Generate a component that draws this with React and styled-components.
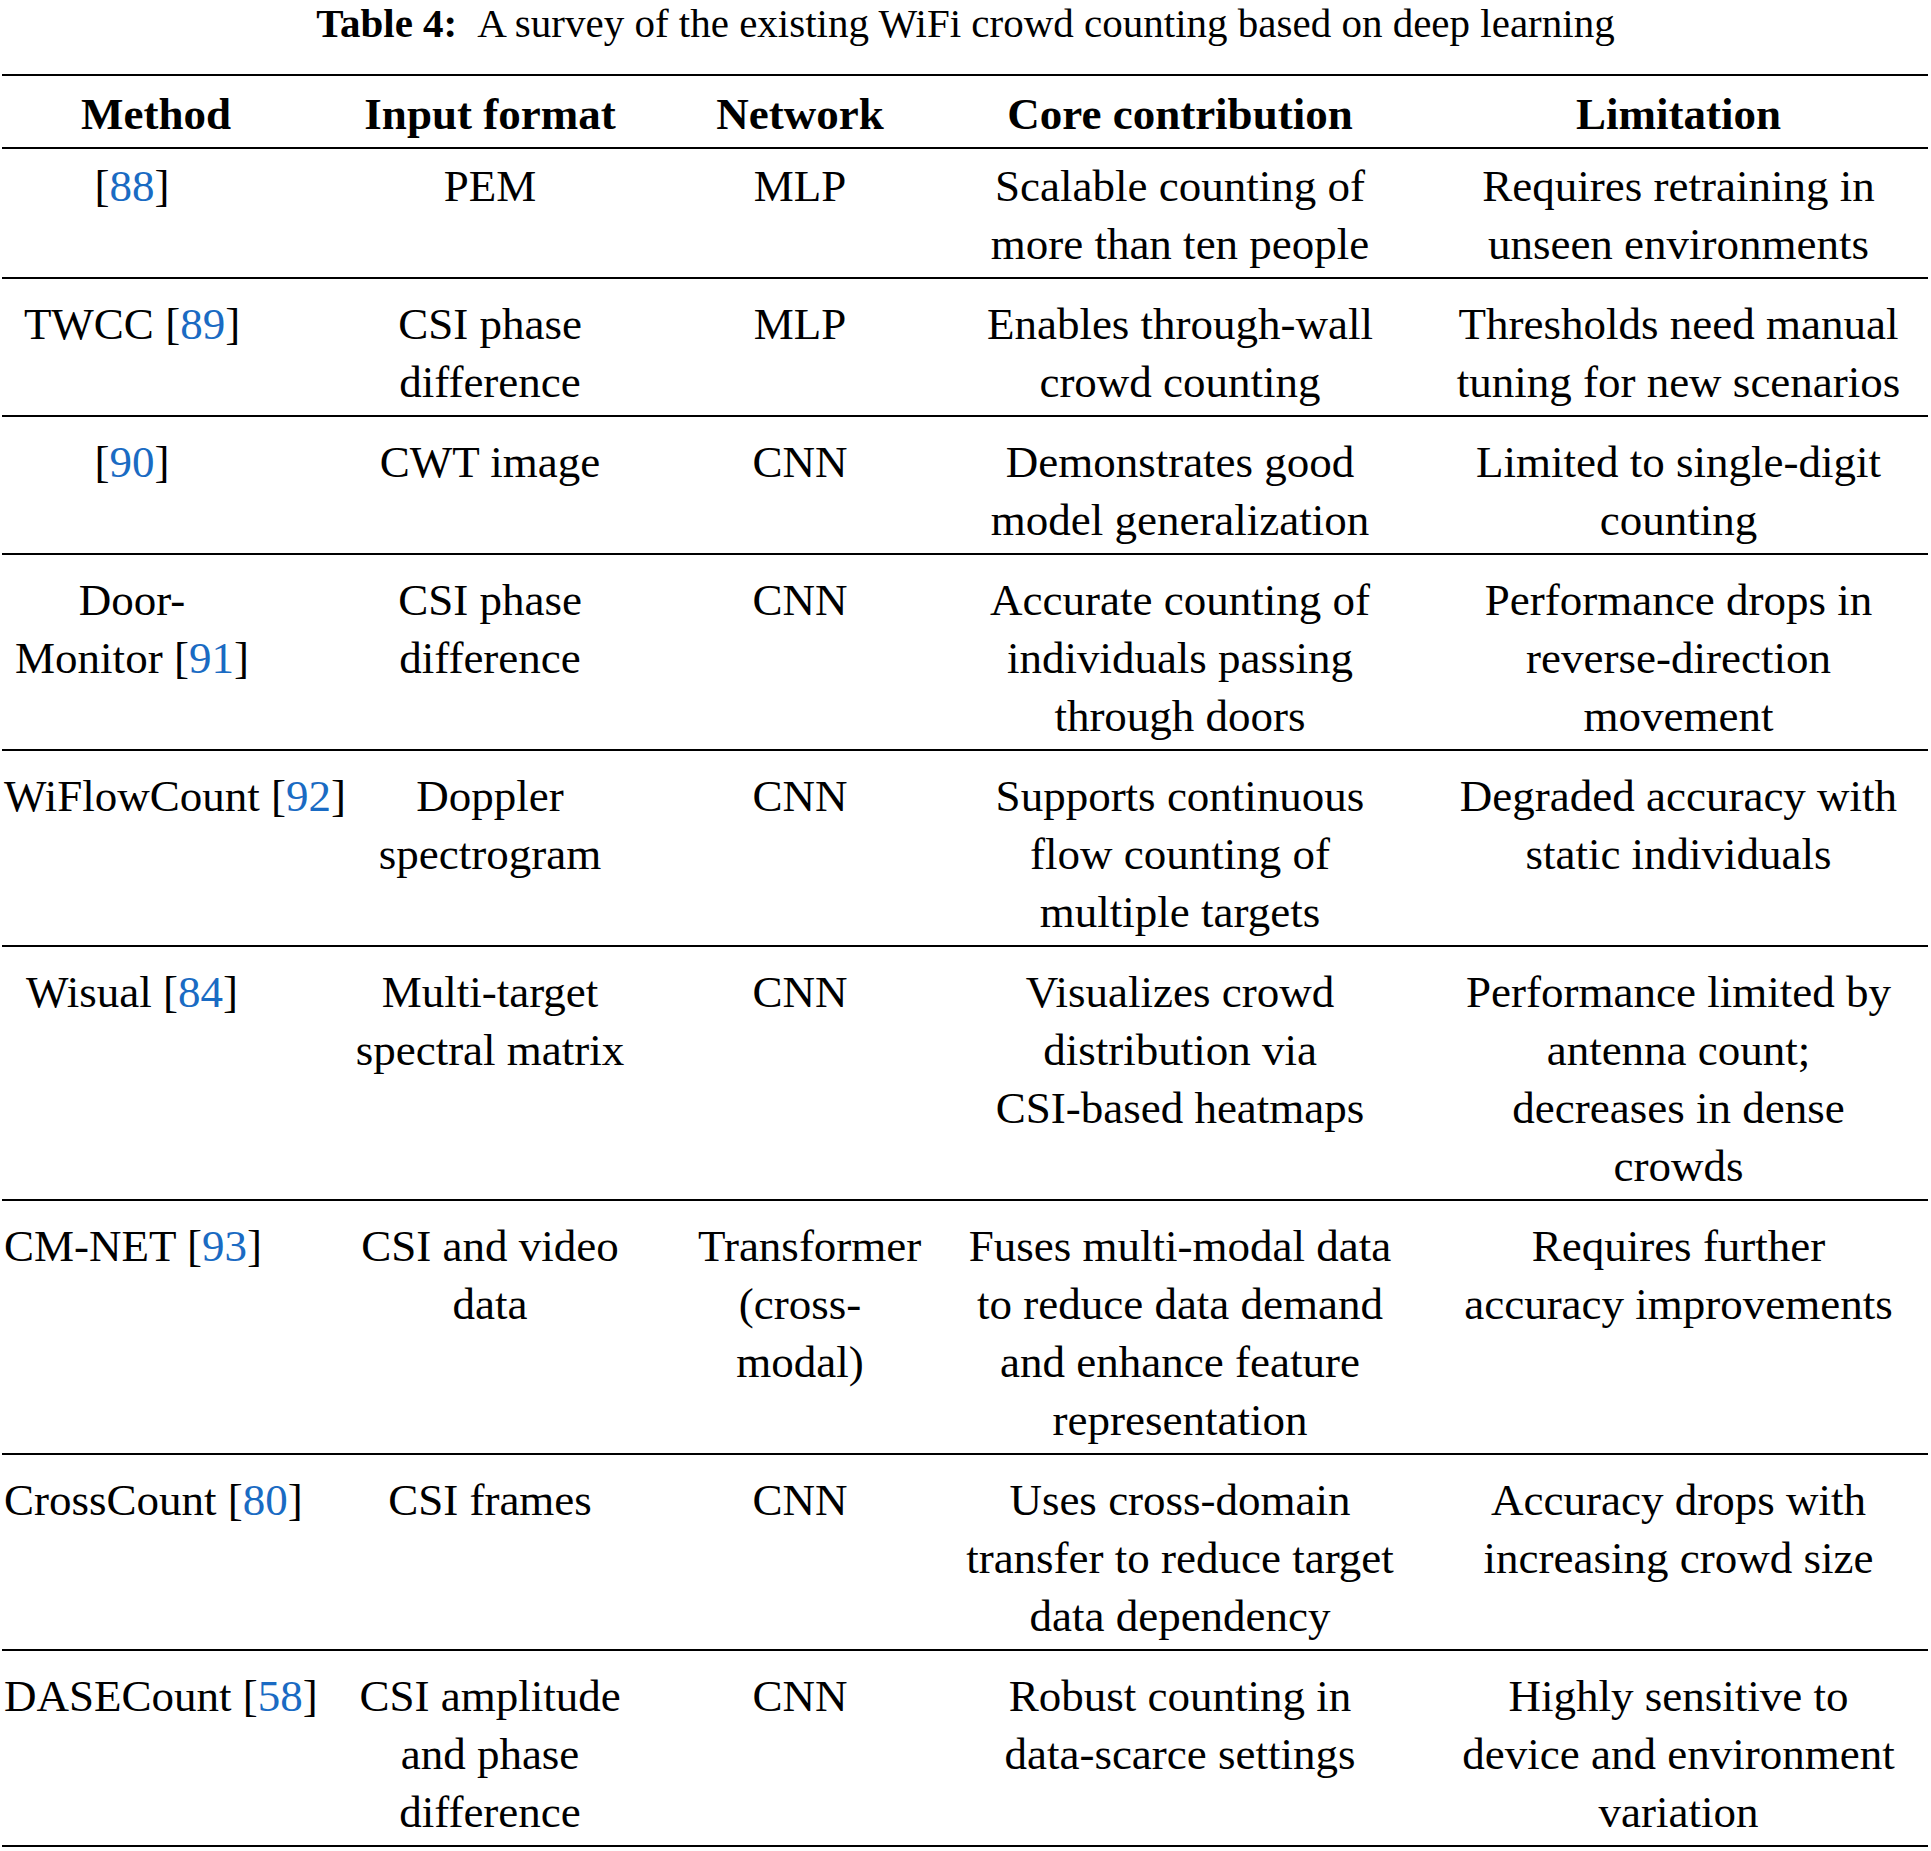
import React from 'react'
import styled, { createGlobalStyle } from 'styled-components'

const GlobalStyle = createGlobalStyle`
  body {
    margin: 0;
    background: #fff;
    color: #000;
    font-family: "Liberation Serif", "Times New Roman", serif;
  }
`

const Page = styled.div`
  width: 1931px;
`

const Caption = styled.div`
  font-size: 41px;
  line-height: 46px;
  text-align: center;
  white-space: nowrap;
  margin-bottom: 28px;
`

const CaptionLabel = styled.b`
  font-weight: 700;
  margin-right: 20px;
`

const Table = styled.div`
  margin-left: 2px;
  width: 1926px;
  border-top: 2px solid #000;
  font-size: 45px;
  line-height: 58px;
`

const Row = styled.div`
  display: flex;
  align-items: flex-start;
  border-bottom: 2px solid #000;
  padding: ${p => (p.$head ? '9px 0 4px' : p.$first ? '8px 0 4px' : '16px 0 4px')};
  font-weight: ${p => (p.$head ? 700 : 400)};
`

const Cell = styled.div`
  flex: 0 0 auto;
  box-sizing: border-box;
  width: ${p => p.$w}px;
  margin-left: ${p => p.$ml}px;
  padding-left: ${p => p.$indent || 0}px;
  text-align: center;
`

const Line = styled.div`
  white-space: nowrap;
`

const Ref = styled.span`
  color: #1a6bc3;
`

const cols = [
  { ml: 2, w: 256 },
  { ml: 80, w: 300 },
  { ml: 58, w: 204 },
  { ml: 55, w: 446 },
  { ml: 48, w: 455 },
]

const headers = ['Method', 'Input format', 'Network', 'Core contribution', 'Limitation']

const rows = [
  {
    method: [{ ref: '88' }],
    input: ['PEM'],
    net: ['MLP'],
    core: ['Scalable counting of', 'more than ten people'],
    limit: ['Requires retraining in', 'unseen environments'],
  },
  {
    method: [{ name: 'TWCC', ref: '89' }],
    input: ['CSI phase', 'difference'],
    net: ['MLP'],
    core: ['Enables through-wall', 'crowd counting'],
    limit: ['Thresholds need manual', 'tuning for new scenarios'],
  },
  {
    method: [{ ref: '90' }],
    input: ['CWT image'],
    net: ['CNN'],
    core: ['Demonstrates good', 'model generalization'],
    limit: ['Limited to single-digit', 'counting'],
  },
  {
    method: [{ name: 'Door-' }, { name: 'Monitor', ref: '91' }],
    input: ['CSI phase', 'difference'],
    net: ['CNN'],
    core: ['Accurate counting of', 'individuals passing', 'through doors'],
    limit: ['Performance drops in', 'reverse-direction', 'movement'],
  },
  {
    method: [{ name: 'WiFlowCount', ref: '92' }],
    input: ['Doppler', 'spectrogram'],
    net: ['CNN'],
    core: ['Supports continuous', 'flow counting of', 'multiple targets'],
    limit: ['Degraded accuracy with', 'static individuals'],
  },
  {
    method: [{ name: 'Wisual', ref: '84' }],
    input: ['Multi-target', 'spectral matrix'],
    net: ['CNN'],
    core: ['Visualizes crowd', 'distribution via', 'CSI-based heatmaps'],
    limit: ['Performance limited by', 'antenna count;', 'decreases in dense', 'crowds'],
  },
  {
    method: [{ name: 'CM-NET', ref: '93' }],
    input: ['CSI and video', 'data'],
    net: ['Transformer', '(cross-', 'modal)'],
    core: ['Fuses multi-modal data', 'to reduce data demand', 'and enhance feature', 'representation'],
    limit: ['Requires further', 'accuracy improvements'],
  },
  {
    method: [{ name: 'CrossCount', ref: '80' }],
    input: ['CSI frames'],
    net: ['CNN'],
    core: ['Uses cross-domain', 'transfer to reduce target', 'data dependency'],
    limit: ['Accuracy drops with', 'increasing crowd size'],
  },
  {
    method: [{ name: 'DASECount', ref: '58' }],
    input: ['CSI amplitude', 'and phase', 'difference'],
    net: ['CNN'],
    core: ['Robust counting in', 'data-scarce settings'],
    limit: ['Highly sensitive to', 'device and environment', 'variation'],
  },
]

const MethodLine = ({ name, num }) => (
  <Line>
    {name}
    {name && num ? ' ' : ''}
    {num && (
      <>
        [<Ref>{num}</Ref>]
      </>
    )}
  </Line>
)

const TextCell = ({ col, lines }) => (
  <Cell $w={col.w} $ml={col.ml}>
    {lines.map((l, i) => <Line key={i}>{l}</Line>)}
  </Cell>
)

export default function App () {
  return (
    <Page>
      <GlobalStyle />
      <Caption>
        <CaptionLabel>Table 4:</CaptionLabel>A survey of the existing WiFi crowd counting based on deep learning
      </Caption>
      <Table>
        <Row $head>
          {headers.map((h, i) => (
            <Cell key={h} $w={cols[i].w} $ml={cols[i].ml} $indent={i === 0 ? 48 : 0}>
              {h}
            </Cell>
          ))}
        </Row>
        {rows.map((r, i) => (
          <Row key={i} $first={i === 0}>
            <Cell $w={cols[0].w} $ml={cols[0].ml}>
              {r.method.map((m, j) => <MethodLine key={j} name={m.name} num={m.ref} />)}
            </Cell>
            <TextCell col={cols[1]} lines={r.input} />
            <TextCell col={cols[2]} lines={r.net} />
            <TextCell col={cols[3]} lines={r.core} />
            <TextCell col={cols[4]} lines={r.limit} />
          </Row>
        ))}
      </Table>
    </Page>
  )
}
